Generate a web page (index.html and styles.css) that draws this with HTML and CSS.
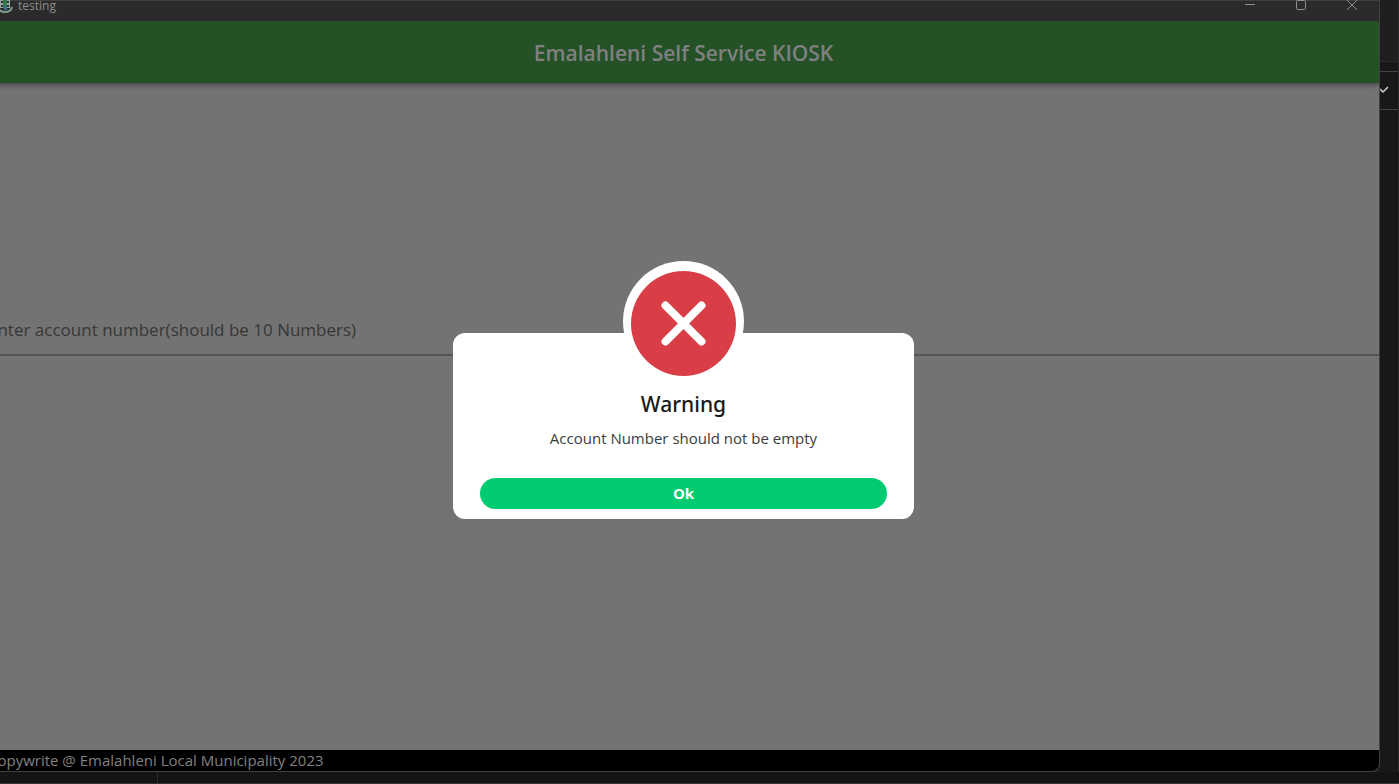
FILE: index.html
```html
<!DOCTYPE html>
<html lang="en">

<head>
    <meta charset="UTF-8">
    <meta name="viewport" content="width=device-width, initial-scale=1.0">
    <title>testing</title>
    <link rel="stylesheet" href="styles.css">
</head>

<body>
    <div class="desktop">
        <div class="window">
            <div class="titleBar">
                <svg class="appIcon" width="16" height="16" viewBox="0 0 16 16" aria-hidden="true">
                    <path d="M1 10q1 5 7 5t7-5" fill="none" stroke="#7d9c93" stroke-width="2" />
                    <path d="M3 2h10v9H3z" fill="#a0a5a2" />
                    <path d="M6 1h4v10H6z" fill="#357a4a" />
                    <path d="M7 9h3v4H7z" fill="#3f719c" />
                    <path d="M4 4h2v2H4zM10 4h2v2h-2zM4 8h2v2H4zM10 8h2v2h-2z" fill="#26382c" />
                </svg>
                <span class="appName">testing</span>
                <button class="winBttn" type="button" aria-label="Minimize">
                    <svg width="12" height="12" viewBox="0 0 12 12">
                        <path d="M1 5.5h10" />
                    </svg>
                </button>
                <button class="winBttn" type="button" aria-label="Maximize">
                    <svg width="12" height="12" viewBox="0 0 12 12">
                        <rect x="1.5" y="1.5" width="9" height="9" rx="1" />
                    </svg>
                </button>
                <button class="winBttn" type="button" aria-label="Close">
                    <svg width="12" height="12" viewBox="0 0 12 12">
                        <path d="M1 1l10 10M11 1L1 11" />
                    </svg>
                </button>
            </div>
            <header class="appBar">
                <h1>Emalahleni Self Service KIOSK</h1>
            </header>
            <main>
                <input class="account" type="text" aria-label="Account number"
                    placeholder="Enter account number(should be 10 Numbers)">
            </main>
            <footer>Copywrite @ Emalahleni Local Municipality 2023</footer>

            <!-- warning dialog -->
            <div class="overlay">
                <div class="dialog" role="alertdialog" aria-labelledby="warnTitle" aria-describedby="warnText">
                    <div class="badge">
                        <svg width="105" height="105" viewBox="0 0 105 105" aria-hidden="true">
                            <circle cx="52.5" cy="52.5" r="52.5" fill="#d93e46" />
                            <path d="M34.5 34.5l36 36M70.5 34.5l-36 36" fill="none" stroke="#fff" stroke-width="8"
                                stroke-linecap="round" />
                        </svg>
                    </div>
                    <div class="card">
                        <h2 id="warnTitle">Warning</h2>
                        <p id="warnText">Account Number should not be empty</p>
                        <button class="okBttn" type="button">Ok</button>
                    </div>
                </div>
            </div>
        </div>
        <!-- editor behind the window -->
        <aside class="behind">
            <div class="behindTabs"></div>
            <div class="behindBar">
                <svg width="12" height="8" viewBox="0 0 12 8" aria-hidden="true">
                    <path d="M0 3l3 3 5-5" fill="none" stroke="#d0d0d0" stroke-width="1.5" />
                </svg>
            </div>
        </aside>
        <div class="behindBottom">
            <div class="bottomPane"></div>
        </div>
    </div>
</body>

</html>
```
FILE: styles.css
```css
* {
    box-sizing: border-box;
}

body {
    margin: 0;
    background-color: #181818;
    font-family: "Open Sans", "Noto Sans", sans-serif;
    overflow: hidden;
}

.desktop {
    display: grid;
    grid-template-columns: 1fr 19px;
    grid-template-rows: 1fr 12px;
    height: 100vh;
}

/* the window hangs a little over the left edge */
.window {
    position: relative;
    display: flex;
    flex-direction: column;
    margin-left: -12px;
    border-right: 1px solid #404040;
    border-bottom: 1px solid #404040;
    border-radius: 0 0 8px 0;
    background-color: #737373;
    overflow: hidden;
}

.titleBar {
    display: flex;
    height: 21px;
    padding: 0 2px 0 9px;
    border-top: 1px solid #404040;
    background-color: #2b2b2b;
    color: #8c8c8c;
    font-size: 12px;
    line-height: 10px;
}

.appIcon {
    margin: -4px 5px 0 0;
}

.appName {
    flex: 1;
}

.winBttn {
    width: 51px;
    height: 12px;
    margin-top: -2px;
    padding: 0;
    border: 0;
    background: none;
    line-height: 0;
}

.winBttn svg {
    fill: none;
    stroke: #909090;
}

.appBar {
    height: 62px;
    background-color: #245126;
    box-shadow: 0 2px 5px rgba(0, 0, 0, 0.4);
    text-align: center;
}

.appBar h1 {
    margin: 0;
    color: #808080;
    font-size: 21px;
    font-weight: 600;
    line-height: 64px;
}

main {
    flex: 1;
    padding-top: 222px;
}

.account {
    display: block;
    width: 100%;
    height: 51px;
    padding: 0;
    border: 0;
    border-bottom: 2px solid #565656;
    background: none;
    font-family: inherit;
    font-size: 17px;
}

.account::placeholder {
    color: #373737;
    opacity: 1;
}

footer {
    height: 21px;
    background-color: #000;
    color: #808080;
    font-size: 15px;
    line-height: 21px;
}

.overlay {
    position: absolute;
    inset: 0;
    display: flex;
    align-items: center;
    justify-content: center;
    padding-top: 9px;
}

.dialog {
    width: 461px;
}

.badge {
    position: relative;
    width: 121px;
    height: 121px;
    margin: 0 auto -49px;
    padding: 10px 8px 0;
    border-radius: 50%;
    background-color: #fff;
}

.badge svg {
    display: block;
}

.card {
    padding: 56px 27px 10px;
    border-radius: 12px;
    background-color: #fff;
    text-align: center;
}

.card h2 {
    margin: 0;
    color: #1a1a1a;
    font-family: "Noto Sans", sans-serif;
    font-size: 21px;
    font-weight: 500;
    line-height: 30px;
}

.card p {
    margin: 9px 0 29px;
    color: #3c3c3c;
    font-size: 15px;
    line-height: 21px;
}

.okBttn {
    display: block;
    width: 100%;
    height: 31px;
    padding: 0 0 2px;
    border: 0;
    border-radius: 16px;
    background-color: #00cb71;
    color: #fff;
    font-family: inherit;
    font-size: 15px;
    font-weight: 700;
}

.behind {
    border-right: 1px solid #2b2b2b;
}

.behindTabs {
    height: 62px;
    margin-bottom: 9px;
    border-bottom: 1px solid #2b2b2b;
    background-color: #1f1f1f;
}

.behindBar {
    height: 39px;
    padding-top: 14px;
    border-top: 1px solid #454545;
    border-bottom: 1px solid #454545;
    line-height: 0;
}

.behindBottom {
    grid-column: 1 / 3;
    border-bottom: 1px solid #333;
    background-color: #141414;
}

.bottomPane {
    width: 158px;
    height: 100%;
    border-right: 1px solid #2b2b2b;
}
```
